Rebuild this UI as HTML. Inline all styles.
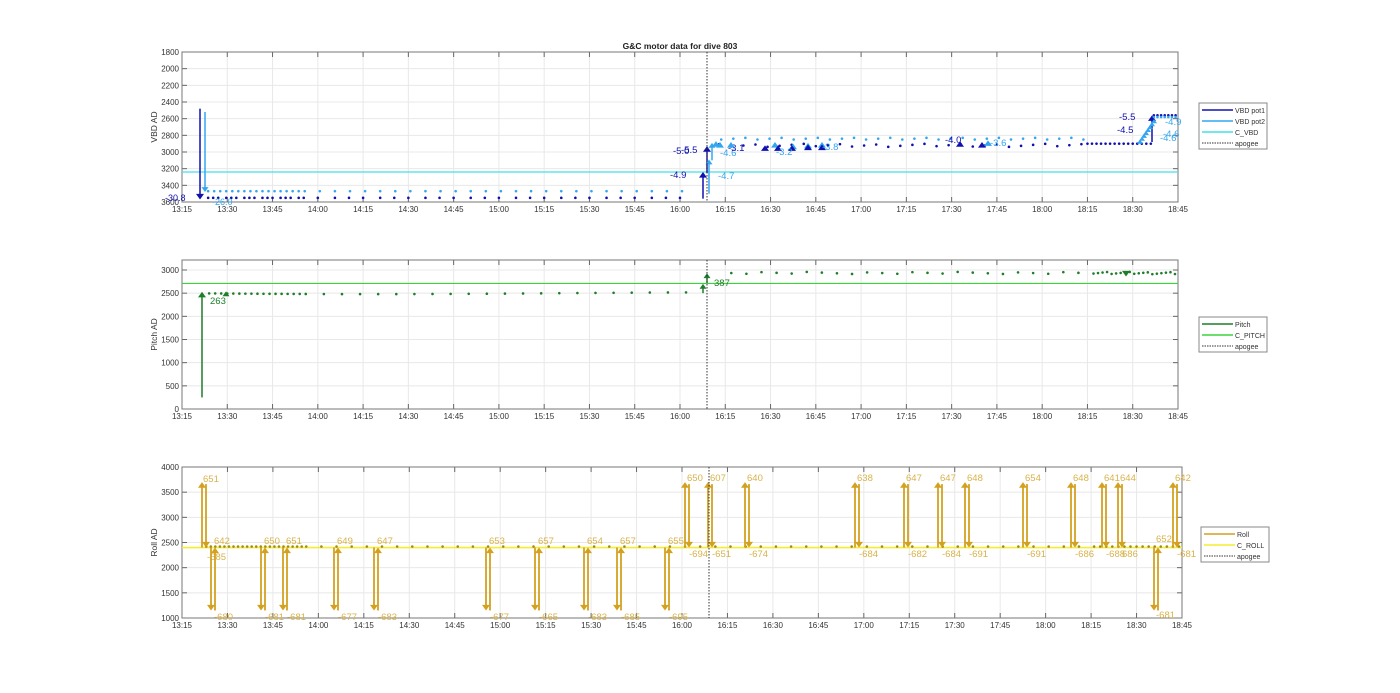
<!DOCTYPE html>
<html><head><meta charset="utf-8"><style>
html,body{margin:0;padding:0;background:#fff;width:1400px;height:693px;overflow:hidden}
svg{display:block;font-family:"Liberation Sans",sans-serif}
</style></head><body>
<svg id="s" width="1400" height="693" xmlns="http://www.w3.org/2000/svg">
<text x="680" y="49" font-size="8.5" font-weight="bold" text-anchor="middle" fill="#222">G&amp;C motor data for dive 803</text>
</svg>
<script>
const S=document.getElementById('s');const NS='http://www.w3.org/2000/svg';
function el(t,a,txt){const e=document.createElementNS(NS,t);for(const k in a)e.setAttribute(k,a[k]);if(txt!==undefined)e.textContent=txt;S.appendChild(e);return e;}
const ticks=['13:15','13:30','13:45','14:00','14:15','14:30','14:45','15:00','15:15','15:30','15:45','16:00','16:15','16:30','16:45','17:00','17:15','17:30','17:45','18:00','18:15','18:30','18:45'];
function axes(x0,x1,y0,y1,ylab,yt,ylabel){
  const w=x1-x0;
  for(let i=0;i<ticks.length;i++){const x=x0+i*w/22;el('line',{x1:x,x2:x,y1:y0,y2:y1,stroke:'#e8e8e8','stroke-width':1});
    el('text',{x:x,y:y1+10,'font-size':8,'text-anchor':'middle',fill:'#333'},ticks[i]);
    el('line',{x1:x,x2:x,y1:y1,y2:y1-5,stroke:'#666'});el('line',{x1:x,x2:x,y1:y0,y2:y0+5,stroke:'#666'});}
  for(const [y,l] of yt){el('line',{x1:x0,x2:x1,y1:y,y2:y,stroke:'#e8e8e8'});
    el('text',{x:x0-3,y:y+3,'font-size':8,'text-anchor':'end',fill:'#333'},l);
    el('line',{x1:x0,x2:x0+5,y1:y,y2:y,stroke:'#666'});el('line',{x1:x1,x2:x1-5,y1:y,y2:y,stroke:'#666'});}
  el('rect',{x:x0,y:y0,width:w,height:y1-y0,fill:'none',stroke:'#777','stroke-width':1});
  el('text',{x:0,y:0,'font-size':8.5,'text-anchor':'middle',fill:'#333',transform:`translate(${x0-25},${(y0+y1)/2}) rotate(-90)`},ylabel);
}
function legend(x,y,items){
  el('rect',{x:x,y:y,width:68,height:items.length*11+2,fill:'#fff',stroke:'#888'});
  items.forEach((it,i)=>{const yy=y+7+i*11;
    el('line',{x1:x+3,x2:x+34,y1:yy,y2:yy,stroke:it[1],'stroke-width':it[2]?1:1.6,'stroke-dasharray':it[2]?'1.5,1':''});
    el('text',{x:x+36,y:yy+3,'font-size':7,fill:'#333'},it[0]);});
}
function tri(x,y,up,c,s){s=s||4;el('path',{d:up?`M${x-s} ${y+s*1.4}L${x} ${y}L${x+s} ${y+s*1.4}Z`:`M${x-s} ${y-s*1.4}L${x} ${y}L${x+s} ${y-s*1.4}Z`,fill:c});}
function dot(x,y,c){el('circle',{cx:x,cy:y,r:1.3,fill:c});}
// ---- Plot 1
const yt1=[];for(let v=1800;v<=3600;v+=200){yt1.push([52+(v-1800)/1800*150,v==3600?'3600':String(v)]);}
axes(182,1178,52,202,'',yt1,'VBD AD');
const X1=t=>182+t*996/330,Y1=v=>52+(v-1800)/1800*150;
const D1='#1010b0',L1='#33a6f0',C1='#40e0e8';
el('line',{x1:182,x2:1178,y1:Y1(3240),y2:Y1(3240),stroke:C1,'stroke-width':1.2});
for(let t=8;t<170;t+= (t<40?2:5)){dot(X1(t)+ (t%3),Y1(3550),D1);dot(X1(t)+2,Y1(3470),L1);}
for(let t=178;t<300;t+=4){dot(X1(t),Y1(2900+((t*7)%40)),D1);dot(X1(t)+2,Y1(2830+((t*5)%30)),L1);}
for(let t=300;t<322;t+=1.5){dot(X1(t),Y1(2900),D1);}
el('line',{x1:200,x2:200,y1:Y1(2480),y2:Y1(3540),stroke:D1,'stroke-width':1.5});tri(200,Y1(3570),false,D1,4);
el('line',{x1:205,x2:205,y1:Y1(2520),y2:Y1(3460),stroke:L1,'stroke-width':1.5});tri(205,Y1(3480),false,L1,3.5);
el('text',{x:165,y:201,'font-size':9,fill:D1},'-30.8');el('text',{x:212,y:205,'font-size':9,fill:L1},'-26.0');
el('line',{x1:703,x2:703,y1:Y1(3560),y2:Y1(3260),stroke:D1,'stroke-width':1.5});tri(703,Y1(3240),true,D1,4);
el('line',{x1:707,x2:707,y1:Y1(3250),y2:Y1(2960),stroke:D1,'stroke-width':1.5});tri(707,Y1(2930),true,D1,4);
el('line',{x1:709,x2:709,y1:Y1(3500),y2:Y1(3110),stroke:L1,'stroke-width':1.5});tri(709,Y1(3090),true,L1,3.5);
el('line',{x1:712,x2:712,y1:Y1(3100),y2:Y1(2910),stroke:L1,'stroke-width':1.5});tri(712,Y1(2890),true,L1,3.5);
el('text',{x:670,y:178,'font-size':9.5,fill:D1},'-4.9');el('text',{x:718,y:179,'font-size':9.5,fill:L1},'-4.7');
el('text',{x:673,y:154,'font-size':9.5,fill:D1},'-5.0');el('text',{x:681,y:153,'font-size':9.5,fill:D1},'-5.5');
el('text',{x:720,y:156,'font-size':9.5,fill:L1},'-4.6');el('text',{x:728,y:151,'font-size':9.5,fill:D1},'-3.1');
[[716,2870,L1],[720,2880,L1],[731,2880,L1],[765,2920,D1],[775,2880,L1],[778,2920,D1],[793,2900,L1],[792,2920,D1],[808,2890,L1],[808,2910,D1],[822,2880,L1],[822,2910,D1],[960,2870,D1],[982,2880,D1],[988,2860,L1]].forEach(a=>tri(a[0],Y1(a[1]),true,a[2],4));
el('text',{x:776,y:155,'font-size':9.5,fill:L1},'-3.2');el('text',{x:822,y:150,'font-size':9.5,fill:L1},'-3.8');
el('text',{x:945,y:143,'font-size':9.5,fill:D1},'-4.0');el('text',{x:990,y:146,'font-size':9.5,fill:L1},'-3.6');
el('line',{x1:1152,x2:1152,y1:Y1(2880),y2:Y1(2600),stroke:D1,'stroke-width':1.5});tri(1152,Y1(2560),true,D1,4);
for(let t=322;t<330;t+=1.2){dot(X1(t),Y1(2560),D1);dot(X1(t),Y1(2580),L1);}
for(let i=0;i<8;i++)tri(1140+i*2,Y1(2850-i*35),true,L1,3);
el('text',{x:1119,y:120,'font-size':9.5,fill:D1},'-5.5');el('text',{x:1117,y:133,'font-size':9.5,fill:D1},'-4.5');
el('text',{x:1165,y:125,'font-size':9.5,fill:L1},'-4.9');el('text',{x:1163,y:137,'font-size':9.5,fill:L1},'-4.6');el('text',{x:1160,y:141,'font-size':9.5,fill:L1},'-4.6');
el('line',{x1:707,x2:707,y1:52,y2:202,stroke:'#333','stroke-dasharray':'1.5,1.5'});
legend(1199,103,[['VBD pot1',D1],['VBD pot2',L1],['C_VBD',C1],['apogee','#333',1]]);
// ---- Plot 2
const yt2=[];for(let v=0;v<=3000;v+=500)yt2.push([409-v/3000*139,String(v)]);
axes(182,1178,260,409,'',yt2,'Pitch AD');
const Y2=v=>409-v/3000*139,G='#1e7e2a',G2='#3ad33a';
el('line',{x1:182,x2:1178,y1:Y2(2710),y2:Y2(2710),stroke:G2,'stroke-width':1.2});
for(let t=9;t<172;t+=(t<40?2:6))dot(X1(t),Y2(2500-Math.sin(t/40)*20),G);
for(let t=182;t<330;t+=(t>300?1.5:5))dot(X1(t),Y2(2910+((t*7)%50)),G);
el('line',{x1:202,x2:202,y1:Y2(250),y2:Y2(2450),stroke:G,'stroke-width':1.5});tri(202,Y2(2530),true,G,4);tri(226,Y2(2540),true,G,3.5);
el('text',{x:210,y:304,'font-size':9.5,fill:G},'263');
el('line',{x1:703,x2:703,y1:Y2(2500),y2:Y2(2650),stroke:G,'stroke-width':1.5});tri(703,Y2(2700),true,G,3.5);
el('line',{x1:707,x2:707,y1:Y2(2720),y2:Y2(2850),stroke:G,'stroke-width':1.5});tri(707,Y2(2930),true,G,3.5);
tri(1126,Y2(2860),false,G,4);
el('text',{x:714,y:286,'font-size':9.5,fill:G},'387');
el('line',{x1:707,x2:707,y1:260,y2:409,stroke:'#333','stroke-dasharray':'1.5,1.5'});
legend(1199,317,[['Pitch',G],['C_PITCH',G2],['apogee','#333',1]]);
// ---- Plot 3
const yt3=[];for(let v=1000;v<=4000;v+=500)yt3.push([618-(v-1000)/3000*151,String(v)]);
axes(182,1182,467,618,'',yt3,'Roll AD');
const Y3=v=>618-(v-1000)/3000*151,R='#d4a020',RL='#d9b24a',YL='#f4ee30';
el('line',{x1:182,x2:1182,y1:Y3(2400),y2:Y3(2400),stroke:YL,'stroke-width':1.6});
for(let t=8;t<330;t+=(t<40?1.5:(t>300?2:5)))dot(182+t*1000/330,Y3(2420),'#a08a20');
const mid=Y3(2400);
function pair(x,top,ul,dl,ulx,uly,dlx,dly){
  const e=top?Y3(3700):Y3(1150);
  if(top){el('line',{x1:x,x2:x,y1:mid,y2:e+5,stroke:R,'stroke-width':1.8});tri(x,e,true,R,4);
    el('line',{x1:x+4,x2:x+4,y1:e+2,y2:mid-5,stroke:R,'stroke-width':1.8});tri(x+4,mid,false,R,4);}
  else{el('line',{x1:x,x2:x,y1:mid,y2:e-5,stroke:R,'stroke-width':1.8});tri(x,e,false,R,4);
    el('line',{x1:x+4,x2:x+4,y1:e,y2:mid+5,stroke:R,'stroke-width':1.8});tri(x+4,mid,true,R,4);}
  if(ul)el('text',{x:ulx,y:uly,'font-size':9.5,fill:RL},ul);
  if(dl)el('text',{x:dlx,y:dly,'font-size':9.5,fill:RL},dl);
}
pair(202,true,'651','-685',203,482,207,560);
pair(211,false,'642','-680',214,544,214,620);
[[261,'650','-681'],[283,'651','-681'],[334,'649','-677'],[374,'647','-683'],[486,'653','-677'],[535,'657','-665'],[584,'654','-683'],[617,'657','-685'],[665,'655','-695']].forEach(a=>pair(a[0],false,a[1],a[2],a[0]+3,544,a[0]+4,620));
[[685,'650','-694'],[708,'607','-651'],[745,'640','-674'],[855,'638','-684'],[904,'647','-682'],[938,'647','-684'],[965,'648','-691'],[1023,'654','-691'],[1071,'648','-686'],[1102,'641','-688'],[1118,'644','686'],[1173,'642','-681']].forEach(a=>pair(a[0],true,a[1],a[2],a[0]+2,481,a[0]+4,557));
pair(1154,false,'652','-681',1156,542,1156,618);
el('line',{x1:709,x2:709,y1:467,y2:618,stroke:'#333','stroke-dasharray':'1.5,1.5'});
legend(1201,527,[['Roll',R],['C_ROLL',YL],['apogee','#333',1]]);
</script>
</body></html>
